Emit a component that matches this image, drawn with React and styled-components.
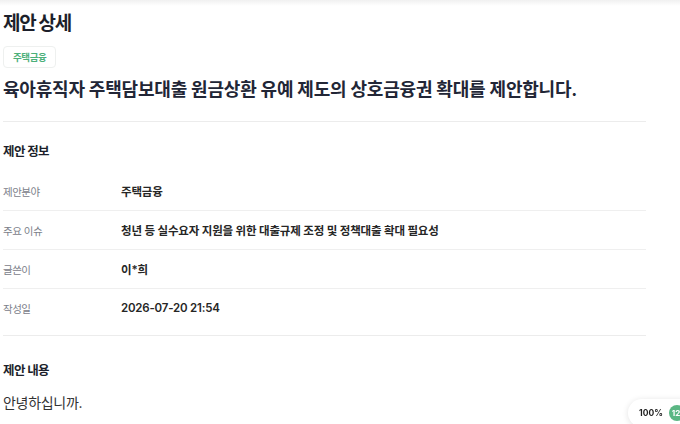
import React from "react";
import styled, { createGlobalStyle } from "styled-components";

const GlobalStyle = createGlobalStyle`
  html, body { margin: 0; padding: 0; background: #ffffff; }
  body {
    font-family: "Inter", "Noto Sans CJK KR", "Noto Sans", sans-serif;
    color: #222;
    -webkit-font-smoothing: antialiased;
  }
`;

const TopShade = styled.div`
  height: 6px;
  background: linear-gradient(to bottom, rgba(0, 0, 0, 0.06), rgba(0, 0, 0, 0));
`;

const Page = styled.main`
  width: 643px;
  margin-left: 3px;
  display: flex;
  flex-direction: column;
`;

const HeaderSection = styled.section`
  display: flex;
  flex-direction: column;
  align-items: flex-start;
  padding-bottom: 17px;
  border-bottom: 1px solid #ececec;
`;

const Title = styled.h1`
  margin: 4px 0 0;
  font-size: 19px;
  line-height: 28px;
  font-weight: 700;
  letter-spacing: -1.3px;
  color: #1c1f2b;
`;

const Badge = styled.span`
  margin-top: 8px;
  height: 22px;
  display: inline-flex;
  align-items: center;
  padding: 0 9px;
  box-sizing: border-box;
  border: 1px solid #eef0ef;
  border-radius: 4px;
  font-size: 9.5px;
  font-weight: 600;
  letter-spacing: -0.4px;
  color: #4cb07a;
`;

const Headline = styled.h2`
  margin: 8px 0 0;
  font-size: 18px;
  line-height: 28px;
  font-weight: 700;
  letter-spacing: -0.2px;
  color: #222636;
`;

const Section = styled.section`
  display: flex;
  flex-direction: column;
  padding-top: ${(p) => p.$top}px;
  padding-bottom: ${(p) => p.$bottom}px;
  border-bottom: ${(p) => (p.$divider ? "1px solid #ececec" : "none")};
`;

const SectionHeading = styled.h3`
  margin: 0;
  font-size: 12.5px;
  line-height: 20px;
  font-weight: 700;
  letter-spacing: -0.6px;
  color: #1c1f2b;
`;

const InfoList = styled.dl`
  margin: 10px 0 0;
  display: flex;
  flex-direction: column;
`;

const InfoRow = styled.div`
  display: grid;
  grid-template-columns: 118px 1fr;
  align-items: center;
  height: 38px;
  border-bottom: 1px solid #efefef;
  &:last-child {
    border-bottom: none;
  }
`;

const Label = styled.dt`
  margin: 0;
  font-size: 10.5px;
  font-weight: 400;
  letter-spacing: -0.5px;
  color: #7b8089;
`;

const Value = styled.dd`
  margin: 0;
  font-size: 11.5px;
  font-weight: 600;
  letter-spacing: -0.2px;
  color: #262626;
`;

const BodyText = styled.p`
  margin: 11px 0 0;
  font-size: 14px;
  line-height: 22px;
  font-weight: 400;
  letter-spacing: -0.3px;
  color: #333;
`;

const ZoomPill = styled.div`
  position: fixed;
  left: 628px;
  top: 399px;
  height: 28px;
  width: 70px;
  box-sizing: border-box;
  padding-left: 11px;
  display: flex;
  align-items: center;
  gap: 6px;
  background: #fff;
  border-radius: 14px;
  box-shadow: 0 1px 6px rgba(0, 0, 0, 0.12);
`;

const ZoomText = styled.span`
  font-size: 8.5px;
  font-weight: 700;
  color: #1f1f1f;
`;

const CountDot = styled.span`
  width: 16px;
  height: 16px;
  border-radius: 50%;
  background: #5bb784;
  color: #fff;
  font-size: 8px;
  font-weight: 700;
  display: inline-flex;
  align-items: center;
  padding-left: 3px;
  box-sizing: border-box;
`;

const rows = [
  { label: "제안분야", value: "주택금융" },
  { label: "주요 이슈", value: "청년 등 실수요자 지원을 위한 대출규제 조정 및 정책대출 확대 필요성" },
  { label: "글쓴이", value: "이*희" },
  { label: "작성일", value: "2026-07-20 21:54" },
];

export default function App() {
  return (
    <>
      <GlobalStyle />
      <TopShade />
      <Page>
        <HeaderSection>
          <Title>제안 상세</Title>
          <Badge>주택금융</Badge>
          <Headline>육아휴직자 주택담보대출 원금상환 유예 제도의 상호금융권 확대를 제안합니다.</Headline>
        </HeaderSection>
        <Section $top={20} $bottom={8} $divider>
          <SectionHeading>제안 정보</SectionHeading>
          <InfoList>
            {rows.map((r) => (
              <InfoRow key={r.label}>
                <Label>{r.label}</Label>
                <Value>{r.value}</Value>
              </InfoRow>
            ))}
          </InfoList>
        </Section>
        <Section $top={25} $bottom={0}>
          <SectionHeading>제안 내용</SectionHeading>
          <BodyText>안녕하십니까.</BodyText>
        </Section>
      </Page>
      <ZoomPill>
        <ZoomText>100%</ZoomText>
        <CountDot>12</CountDot>
      </ZoomPill>
    </>
  );
}
